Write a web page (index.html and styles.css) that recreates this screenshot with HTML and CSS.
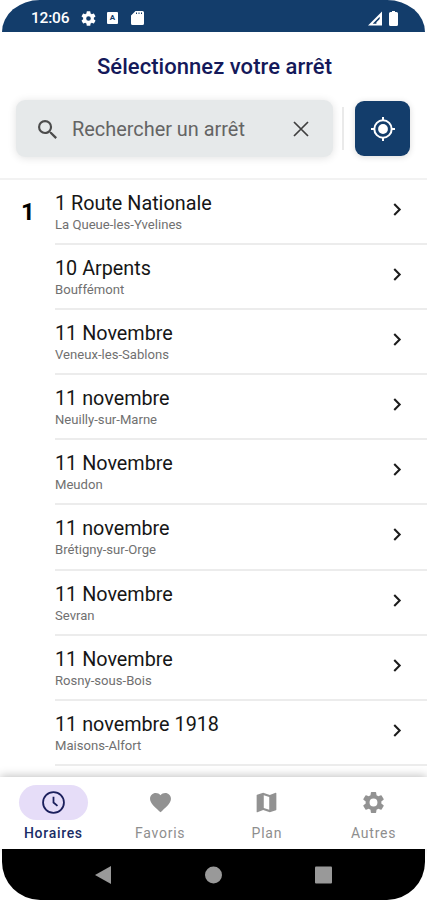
FILE: index.html
```html
<!DOCTYPE html>
<html lang="fr">
<head>
    <meta charset="UTF-8">
    <meta name="viewport" content="width=device-width, initial-scale=1.0">
    <title>Sélectionnez votre arrêt</title>
    <link rel="stylesheet" href="styles.css">
</head>
<body>

<div id="phone">
    <div class="status-bar">
        <span class="time">12:06</span>
        <svg class="status-gear" viewBox="2 2 20 20"><path d="M19.14 12.94a7 7 0 0 0 0-1.88l2.03-1.58a.5.5 0 0 0 .12-.61l-1.92-3.32a.5.5 0 0 0-.59-.22l-2.39.96a7 7 0 0 0-1.62-.94l-.36-2.54a.5.5 0 0 0-.48-.41h-3.84a.5.5 0 0 0-.47.41l-.36 2.54a7 7 0 0 0-1.62.94l-2.39-.96a.5.5 0 0 0-.59.22L2.74 8.87a.5.5 0 0 0 .12.61l2.03 1.58a7 7 0 0 0 0 1.88l-2.03 1.58a.5.5 0 0 0-.12.61l1.92 3.32c.12.22.37.29.59.22l2.39-.96c.5.38 1.03.7 1.62.94l.36 2.54c.05.24.24.41.48.41h3.84c.24 0 .44-.17.47-.41l.36-2.54a7 7 0 0 0 1.62-.94l2.39.96c.22.08.47 0 .59-.22l1.92-3.32a.5.5 0 0 0-.12-.61zM12 15.1a3.1 3.1 0 1 1 0-6.2 3.1 3.1 0 0 1 0 6.2z"/></svg>
        <span class="status-a">A</span>
        <svg class="status-card" viewBox="0 0 13 14"><path d="M4.5 0H11.5a1.5 1.5 0 0 1 1.5 1.5V12.5a1.5 1.5 0 0 1-1.5 1.5H1.5A1.5 1.5 0 0 1 0 12.5V4.5z"/><path class="slots" d="M5.5 1.5v1.5M8 1.5v1.5M10.5 1.5v1.5"/></svg>
        <svg class="status-signal" viewBox="0 0 15 15"><path d="M0 15L15 0v15z"/><path class="outline" d="M5 13L12.5 5.5V8L9 11.5V13z"/></svg>
        <svg class="status-battery" viewBox="0 0 9 15"><path d="M3 0h3v1h1.5A1.5 1.5 0 0 1 9 2.5v11A1.5 1.5 0 0 1 7.5 15h-6A1.5 1.5 0 0 1 0 13.5v-11a1.5 1.5 0 0 1 1.5-1.5H3z"/></svg>
    </div>

    <div class="header">
        <h1>Sélectionnez votre arrêt</h1>
        <div class="search-row">
            <div class="search">
                <svg class="search-icon" viewBox="3 3 17.5 17.5"><path d="M15.5 14h-.79l-.28-.27A6.47 6.47 0 0 0 16 9.5 6.5 6.5 0 1 0 9.5 16c1.61 0 3.09-.59 4.23-1.57l.27.28v.79l5 4.99L20.49 19zm-6 0a4.5 4.5 0 1 1 0-9 4.5 4.5 0 0 1 0 9z"/></svg>
                <span class="placeholder">Rechercher un arrêt</span>
                <svg class="clear-icon" viewBox="0 0 16 16"><path d="M1 1l14 14M15 1L1 15"/></svg>
            </div>
            <span class="separator"></span>
            <button class="locate">
                <svg viewBox="0 0 24 24"><circle cx="12" cy="12" r="8.7"/><path d="M12 0v3.5M12 20.5v3.5M0 12h3.5M20.5 12h3.5"/><circle class="dot" cx="12" cy="12" r="4.9"/></svg>
            </button>
        </div>
    </div>

    <div class="stops">
        <div class="letter">1</div>
        <ul>
            <li><div><h2>1 Route Nationale</h2><p>La Queue-les-Yvelines</p></div><svg viewBox="0 0 8 12"><path d="M1 1l5 5-5 5"/></svg></li>
            <li><div><h2>10 Arpents</h2><p>Bouffémont</p></div><svg viewBox="0 0 8 12"><path d="M1 1l5 5-5 5"/></svg></li>
            <li><div><h2>11 Novembre</h2><p>Veneux-les-Sablons</p></div><svg viewBox="0 0 8 12"><path d="M1 1l5 5-5 5"/></svg></li>
            <li><div><h2>11 novembre</h2><p>Neuilly-sur-Marne</p></div><svg viewBox="0 0 8 12"><path d="M1 1l5 5-5 5"/></svg></li>
            <li><div><h2>11 Novembre</h2><p>Meudon</p></div><svg viewBox="0 0 8 12"><path d="M1 1l5 5-5 5"/></svg></li>
            <li><div><h2>11 novembre</h2><p>Brétigny-sur-Orge</p></div><svg viewBox="0 0 8 12"><path d="M1 1l5 5-5 5"/></svg></li>
            <li><div><h2>11 Novembre</h2><p>Sevran</p></div><svg viewBox="0 0 8 12"><path d="M1 1l5 5-5 5"/></svg></li>
            <li><div><h2>11 Novembre</h2><p>Rosny-sous-Bois</p></div><svg viewBox="0 0 8 12"><path d="M1 1l5 5-5 5"/></svg></li>
            <li><div><h2>11 novembre 1918</h2><p>Maisons-Alfort</p></div><svg viewBox="0 0 8 12"><path d="M1 1l5 5-5 5"/></svg></li>
        </ul>
    </div>

    <div class="tabs">
        <div class="tab active">
            <span class="pill"><svg viewBox="1 1 22 22"><circle cx="12" cy="12" r="10"/><path d="M12 6.5V12l3.8 3.3"/></svg></span>
            <span>Horaires</span>
        </div>
        <div class="tab">
            <span class="pill"><svg viewBox="1 1 22 22"><path d="M12 21.35l-1.45-1.32C5.4 15.36 2 12.28 2 8.5 2 5.42 4.42 3 7.5 3c1.74 0 3.41.81 4.5 2.09C13.09 3.81 14.76 3 16.5 3 19.58 3 22 5.42 22 8.5c0 3.78-3.4 6.86-8.55 11.54z"/></svg></span>
            <span>Favoris</span>
        </div>
        <div class="tab">
            <span class="pill"><svg viewBox="1.5 1.5 21 21"><path fill-rule="evenodd" d="M20.5 3l-.16.03L15 5.1 9 3 3.36 4.9a.5.5 0 0 0-.36.48V20.5a.5.5 0 0 0 .5.5l.16-.03L9 18.9l6 2.1 5.64-1.9a.5.5 0 0 0 .36-.48V3.5a.5.5 0 0 0-.5-.5zM9.5 5.3l5 1.75v11.65l-5-1.75z"/></svg></span>
            <span>Plan</span>
        </div>
        <div class="tab">
            <span class="pill"><svg viewBox="1.5 1.5 21 21"><path d="M19.14 12.94a7 7 0 0 0 0-1.88l2.03-1.58a.5.5 0 0 0 .12-.61l-1.92-3.32a.5.5 0 0 0-.59-.22l-2.39.96a7 7 0 0 0-1.62-.94l-.36-2.54a.5.5 0 0 0-.48-.41h-3.84a.5.5 0 0 0-.47.41l-.36 2.54a7 7 0 0 0-1.62.94l-2.39-.96a.5.5 0 0 0-.59.22L2.74 8.87a.5.5 0 0 0 .12.61l2.03 1.58a7 7 0 0 0 0 1.88l-2.03 1.58a.5.5 0 0 0-.12.61l1.92 3.32c.12.22.37.29.59.22l2.39-.96c.5.38 1.03.7 1.62.94l.36 2.54c.05.24.24.41.48.41h3.84c.24 0 .44-.17.47-.41l.36-2.54a7 7 0 0 0 1.62-.94l2.39.96c.22.08.47 0 .59-.22l1.92-3.32a.5.5 0 0 0-.12-.61zM12 15.6a3.6 3.6 0 1 1 0-7.2 3.6 3.6 0 0 1 0 7.2z"/></svg></span>
            <span>Autres</span>
        </div>
    </div>

    <div class="android-nav">
        <svg viewBox="0 0 17 18"><path d="M0 9L16 0v18z"/></svg>
        <svg viewBox="0 0 17 17"><circle cx="8.5" cy="8.5" r="8.5"/></svg>
        <svg viewBox="0 0 17 17"><rect width="17" height="17" rx="1"/></svg>
    </div>
</div>

</body>
</html>
```

FILE: styles.css
```css
* {
    box-sizing: border-box;
}

body {
    margin: 0;
    background: #fff;
    font-family: Roboto, sans-serif;
}

h1, h2, p, ul {
    margin: 0;
    padding: 0;
    font-weight: 400;
}

svg {
    display: block;
    flex: none;
}

#phone {
    width: 427px;
    height: 900px;
    overflow: hidden;
    display: flex;
    flex-direction: column;
    background: #fff;
}

/* Status bar */
.status-bar {
    height: 32px;
    flex: none;
    display: flex;
    align-items: center;
    margin: 0 2px;
    padding: 4px 27px 0 29px;
    border-radius: 38px 38px 0 0 / 32px 32px 0 0;
    background: #133d6b;
    color: #fff;
}

.status-bar svg {
    fill: #fff;
}

.time {
    width: 50px;
    font-size: 15.5px;
    font-weight: 500;
    letter-spacing: -0.2px;
}

.status-gear {
    width: 15px;
    height: 15px;
}

.status-a {
    width: 11px;
    height: 12px;
    margin-left: 11px;
    border-radius: 1px;
    background: #fff;
    color: #133d6b;
    font-size: 8px;
    font-weight: 700;
    line-height: 12px;
    text-align: center;
}

.status-card {
    width: 13px;
    height: 14px;
    margin-left: 13px;
}

.slots {
    stroke: #133d6b;
    stroke-width: 1;
}

.status-signal {
    width: 14px;
    height: 15px;
    margin-left: auto;
}

.status-signal .outline {
    fill: #133d6b;
}

.status-battery {
    width: 9px;
    height: 15px;
    margin-left: 7px;
}

/* Title and search */
.header {
    height: 148px;
    flex: none;
    border-bottom: 2px solid #f2f2f2;
}

.header h1 {
    margin-top: 22px;
    padding-left: 2px;
    font-size: 22px;
    line-height: 26px;
    font-weight: 500;
    letter-spacing: 0.05px;
    text-align: center;
    color: #14195a;
}

.search-row {
    display: flex;
    align-items: center;
    margin-top: 20px;
    padding: 0 17px 0 16px;
}

.search {
    width: 317px;
    height: 57px;
    display: flex;
    align-items: center;
    padding: 1px 24px 0 22px;
    border-radius: 9px;
    background: #e6e9ea;
    box-shadow: 0 1px 8px rgba(0, 0, 0, 0.12);
}

.search-icon {
    width: 19px;
    height: 19px;
    fill: #4c4c4c;
}

.placeholder {
    flex: 1;
    margin-left: 15px;
    padding-top: 1px;
    font-size: 19.9px;
    color: #646464;
    white-space: nowrap;
}

.clear-icon {
    width: 16px;
    height: 16px;
    stroke: #3f3f3f;
    stroke-width: 1.7;
}

.separator {
    width: 2px;
    height: 43px;
    margin-left: 9px;
    background: #eaeaea;
}

.locate {
    width: 55px;
    height: 55px;
    margin-left: auto;
    padding: 0;
    display: flex;
    align-items: center;
    justify-content: center;
    border: none;
    border-radius: 9px;
    background: #133d6b;
    box-shadow: 0 1px 6px rgba(0, 0, 0, 0.15);
}

.locate svg {
    width: 24px;
    height: 24px;
    fill: none;
    stroke: #fff;
    stroke-width: 2;
}

.locate .dot {
    fill: #fff;
    stroke: none;
}

/* List of stops */
.stops {
    flex: 1;
    min-height: 0;
    display: flex;
    overflow: hidden;
}

.letter {
    width: 55px;
    padding: 17px 0 0 21px;
    font-size: 24px;
    font-weight: 700;
    line-height: 30px;
}

.stops ul {
    flex: 1;
    list-style: none;
}

.stops li {
    height: 65.1px;
    display: flex;
    align-items: flex-start;
    justify-content: space-between;
    padding: 11px 25px 0 0;
    border-bottom: 2px solid #ececec;
}

.stops h2 {
    padding-top: 1px;
    font-size: 19.8px;
    line-height: 23px;
    color: #161616;
}

.stops p {
    font-size: 13.1px;
    line-height: 19px;
    color: #707070;
}

.stops li svg {
    width: 9px;
    height: 13px;
    margin-top: 12px;
    fill: none;
    stroke: #1c1c1c;
    stroke-width: 1.9;
}

/* Bottom tabs */
.tabs {
    height: 72px;
    flex: none;
    display: flex;
    position: relative;
    background: #fff;
    box-shadow: 0 -1px 9px rgba(0, 0, 0, 0.25);
}

.tab {
    flex: 1;
    display: flex;
    flex-direction: column;
    align-items: center;
    padding-top: 8px;
    font-size: 14px;
    line-height: 18px;
    font-weight: 400;
    letter-spacing: 0.75px;
    color: #8e8e8e;
}

.pill {
    width: 69px;
    height: 35px;
    margin-bottom: 4px;
    display: flex;
    align-items: center;
    justify-content: center;
    border-radius: 18px;
}

.pill svg {
    width: 23px;
    height: 23px;
    fill: #929292;
}

.active {
    font-weight: 500;
    letter-spacing: 0.7px;
    color: #192c66;
}

.active .pill {
    background: #e6ddf8;
}

.active .pill svg {
    fill: none;
    stroke: #1b1f5c;
    stroke-width: 1.7;
}

/* Android buttons */
.android-nav {
    height: 51px;
    flex: none;
    display: flex;
    align-items: center;
    justify-content: space-between;
    margin: 0 2px;
    padding: 0 93px;
    border-radius: 0 0 38px 38px;
    background: #000;
}

.android-nav svg {
    width: 17px;
    height: 18px;
    fill: #999;
}
```
